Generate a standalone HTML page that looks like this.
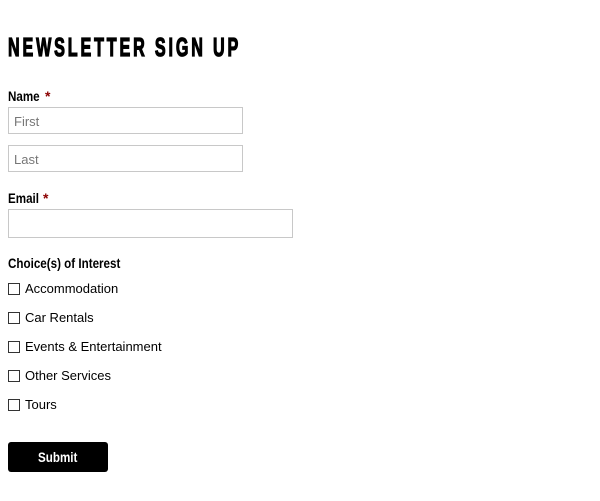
<!DOCTYPE html>
<html><head><style>
body{margin:0;width:600px;height:501px;background:#fff;position:relative;font-family:"Liberation Sans",sans-serif;overflow:hidden}
.a{position:absolute;white-space:nowrap}
.c{transform-origin:0 0;font-weight:bold;color:#000}
.title{left:8px;top:32px;font-size:26px;letter-spacing:4.6px;transform:scaleX(0.62);-webkit-text-stroke:1.3px #000}
.lbl{font-size:14px;transform:scaleX(0.83)}
.req{color:#8b0000;font-size:14px;font-weight:bold}
.in{border:1px solid #c8c8c8;box-sizing:border-box;background:#fff;font-size:13px;color:#777;padding-left:5px;line-height:27px}
.cb{width:12px;height:12px;border:1px solid #333;box-sizing:border-box;left:8px}
.t{font-size:13px;color:#000;left:25px}
.btn{left:8px;top:442px;width:100px;height:30px;background:#000;border-radius:3px}
</style></head><body>
<div class="a c title">NEWSLETTER SIGN UP</div>
<div class="a c lbl" style="left:8px;top:88px">Name</div><div class="a req" style="left:45px;top:88px">*</div>
<div class="a in" style="left:8px;top:107px;width:235px;height:27px">First</div>
<div class="a in" style="left:8px;top:145px;width:235px;height:27px">Last</div>
<div class="a c lbl" style="left:8px;top:190px">Email</div><div class="a req" style="left:43px;top:190px">*</div>
<div class="a in" style="left:8px;top:209px;width:285px;height:29px"></div>
<div class="a c lbl" style="left:8px;top:255px">Choice(s) of Interest</div>
<div class="a cb" style="top:283px"></div><div class="a t" style="top:281px">Accommodation</div>
<div class="a cb" style="top:312px"></div><div class="a t" style="top:310px">Car Rentals</div>
<div class="a cb" style="top:341px"></div><div class="a t" style="top:339px">Events &amp; Entertainment</div>
<div class="a cb" style="top:370px"></div><div class="a t" style="top:368px">Other Services</div>
<div class="a cb" style="top:399px"></div><div class="a t" style="top:397px">Tours</div>
<div class="a btn"></div>
<div class="a c lbl" style="left:38px;top:449px;color:#fff">Submit</div>
</body></html>
